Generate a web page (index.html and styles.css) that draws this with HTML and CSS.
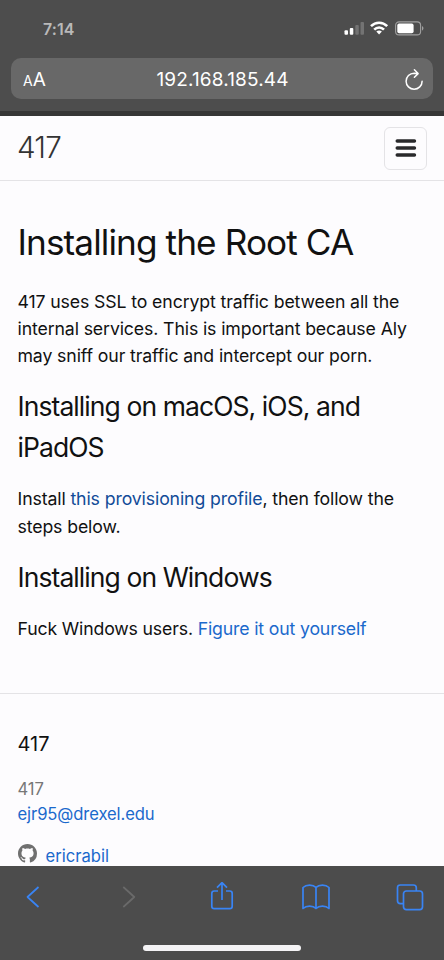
FILE: index.html
```html
<!DOCTYPE html>
<html lang="en">
<head>
<meta charset="utf-8">
<title>Installing the Root CA</title>
<link rel="stylesheet" href="styles.css">
</head>
<body>
<div class="phone">
  <div class="browser-top">
    <div class="status">
      <span class="time">7:14</span>
      <svg class="status-icons" width="82" height="16" viewBox="0 0 82 16">
        <g fill="#fff"><rect x="1.5" y="10.3" width="3.5" height="4.5" rx="1"/><rect x="6.8" y="8.1" width="3.5" height="6.7" rx="1"/></g>
        <g fill="#737373"><rect x="12.3" y="5.1" width="3.5" height="9.7" rx="1"/><rect x="17.5" y="2.1" width="3.5" height="12.7" rx="1"/></g>
        <g fill="none" stroke="#fff" stroke-width="2.6"><path d="M28 6.2C32.6 1.6 39.6 1.6 44.2 6.2"/><path d="M31.2 9.6C34 6.7 38.2 6.7 41 9.6"/></g>
        <path fill="#fff" d="M33.3 11.6Q36.1 9.4 38.9 11.6L36.1 14.6Z"/>
        <rect x="52.6" y="1.9" width="25" height="13" rx="3.5" fill="none" stroke="#a0a0a0" stroke-width="1.1"/>
        <rect x="54.3" y="3.6" width="16.3" height="9.6" rx="1.8" fill="#fff"/>
        <path fill="#a0a0a0" d="M79 6.1Q82 8.3 79 10.7Z"/>
      </svg>
    </div>
    <div class="address">
      <span class="reader"><small>A</small>A</span>
      <span class="url">192.168.185.44</span>
      <svg class="reload" width="20" height="24" viewBox="0 0 20 24" fill="none" stroke="#fff" stroke-width="1.5" stroke-linecap="round" stroke-linejoin="round"><path d="M18.1 13.2A8 8 0 1 1 10.1 5.2L13.9 5.6M10.4 1.8L14.1 5.6L10.4 9.3"/></svg>
    </div>
  </div>
  <main class="page">
    <header class="site-header">
      <a class="site-title">417</a>
      <button class="menu" aria-label="Menu"><svg width="22" height="18" viewBox="0 0 22 18" stroke="#29292b" stroke-width="3.4" stroke-linecap="round"><path d="M2.2 2H19.5M2.2 9H19.5M2.2 16H19.5"/></svg></button>
    </header>
    <article class="content">
      <h1>Installing the Root CA</h1>
      <p>417 uses SSL to encrypt traffic between all the<br>internal services. This is important because Aly<br>may sniff our traffic and intercept our porn.</p>
      <h2>Installing on macOS, iOS, and<br>iPadOS</h2>
      <p>Install <a class="visited">this provisioning profile</a>, then follow the<br>steps below.</p>
      <h2>Installing on Windows</h2>
      <p class="closing">Fuck Windows users. <a>Figure it out yourself</a></p>
    </article>
    <footer class="site-footer">
      <h3>417</h3>
      <div class="contact"><span>417</span><br><a>ejr95@drexel.edu</a></div>
      <div class="social">
        <svg width="19" height="19" viewBox="0 0 16 16" fill="#707070"><path d="M8 0C3.58 0 0 3.58 0 8c0 3.54 2.29 6.53 5.47 7.59.4.07.55-.17.55-.38 0-.19-.01-.82-.01-1.49-2.01.37-2.53-.49-2.69-.94-.09-.23-.48-.94-.82-1.13-.28-.15-.68-.52-.01-.53.63-.01 1.08.58 1.23.82.72 1.21 1.87.87 2.33.66.07-.52.28-.87.51-1.07-1.78-.2-3.64-.89-3.64-3.95 0-.87.31-1.59.82-2.15-.08-.2-.36-1.02.08-2.12 0 0 .67-.21 2.2.82.64-.18 1.32-.27 2-.27s1.36.09 2 .27c1.53-1.04 2.2-.82 2.2-.82.44 1.1.16 1.92.08 2.12.51.56.82 1.27.82 2.15 0 3.07-1.87 3.75-3.65 3.95.29.25.54.73.54 1.48 0 1.07-.01 1.93-.01 2.2 0 .21.15.46.55.38A8.01 8.01 0 0 0 16 8c0-4.42-3.58-8-8-8z"/></svg>
        <a>ericrabil</a>
      </div>
    </footer>
  </main>
  <nav class="browser-bottom">
    <div class="tools">
      <svg width="28" height="22" viewBox="0 0 28 22"><path d="M19.5 1L8.5 11L19.5 21"/></svg>
      <svg class="disabled" width="28" height="22" viewBox="0 0 28 22"><path d="M10.3 1L21.3 11L10.3 21"/></svg>
      <svg width="28" height="30" viewBox="-2 1 28 30"><path d="M8 10H4.2Q1.8 10 1.8 12.4V25.2Q1.8 27.6 4.2 27.6H19.8Q22.2 27.6 22.2 25.2V12.4Q22.2 10 19.8 10H16M12 19V2M7 6.7L12 1.7L17 6.7"/></svg>
      <svg width="28" height="26" viewBox="0 0 28 26"><path d="M14 3.5C11 .4 4.3.4 1 3.5V24.5C4.3 21.4 11 21.4 14 24.5C17 21.4 23.7 21.4 27 24.5V3.5C23.7.4 17 .4 14 3.5V24.5"/></svg>
      <svg width="28" height="27" viewBox="0 0 28 27"><path d="M7.5 19.6H4.3Q1.5 19.6 1.5 16.8V3.8Q1.5 1 4.3 1H17.5Q20.3 1 20.3 3.8V7"/><rect x="7.5" y="7" width="19" height="18.6" rx="2.8"/></svg>
    </div>
    <div class="home"></div>
  </nav>
</div>
</body>
</html>
```
FILE: styles.css
```css
* { box-sizing: border-box; }
body { margin: 0; font-family: Inter, "Liberation Sans", sans-serif; color: #111; background: #fdfcfe; }
.phone { width: 444px; height: 960px; display: flex; flex-direction: column; overflow: hidden; }
.browser-top { height: 116px; flex: none; background: #4d4d4d; border-bottom: 5px solid #363636; padding: 20px 11px 0; }
.status { display: flex; justify-content: space-between; height: 38px; padding: 0 8px 0 32px; }
.time { font-size: 16px; line-height: 18px; font-weight: 600; color: #b9b9b9; letter-spacing: .1px; }
.address { height: 41px; border-radius: 10px; background: #686868; color: #fff; display: grid; grid-template-columns: 60px 1fr 60px; align-items: center; padding: 2px 9px 0 12px; }
.reader { font-size: 19px; }
.reader small { font-size: 14px; }
.url { text-align: center; font-size: 19px; letter-spacing: .15px; position: relative; left: -1px; }
.reload { justify-self: end; }
.page { flex: 1; min-height: 0; overflow: hidden; }
.site-header { height: 65px; border-bottom: 1px solid #e4e3e6; display: flex; justify-content: space-between; align-items: center; padding: 0 17px; }
.site-title { font-size: 29.6px; font-weight: 300; letter-spacing: -.8px; color: #333; line-height: 60px; padding-bottom: 2px; }
.menu { width: 43px; height: 43px; border: 1px solid #e4e3e6; border-radius: 6px; background: #fdfcfe; padding: 0; display: grid; place-items: center; }
.content { height: 512px; padding: 34px 17px 0 17.5px; white-space: nowrap; }
h1, h2, h3, p { margin: 0; font-weight: 400; }
h1 { font-size: 35.2px; line-height: 55px; letter-spacing: -.91px; margin-bottom: 17.5px; }
h2 { font-size: 26.5px; line-height: 41px; letter-spacing: -.92px; margin-bottom: 17.3px; }
p { font-size: 17.7px; line-height: 27.3px; letter-spacing: -.12px; margin-bottom: 16.7px; }
.closing { letter-spacing: -.16px; }
a { color: #1b69cc; }
a.visited { color: #124b98; }
.site-footer { border-top: 1px solid #e4e3e6; padding: 35px 17.5px 0; }
h3 { font-size: 20px; line-height: 31px; margin-bottom: 17px; }
.contact { font-size: 16.6px; line-height: 25.4px; letter-spacing: -.1px; color: #777; }
.social { display: flex; align-items: center; gap: 9px; height: 26px; margin-top: 15px; font-size: 16.6px; }
.social svg { margin-bottom: 4px; }
.browser-bottom { height: 94px; flex: none; background: #4c4c4c; display: flex; flex-direction: column; align-items: center; }
.tools { width: 100%; height: 62px; display: flex; justify-content: space-between; align-items: center; padding: 0 20px 0 19px; }
.tools svg { fill: none; stroke: #3984f4; stroke-width: 1.7; stroke-linejoin: round; }
.tools svg.disabled { stroke: #6a6a6a; }
.home { width: 158px; height: 6px; border-radius: 3px; background: #f4f3f5; margin-top: 17px; }
```
